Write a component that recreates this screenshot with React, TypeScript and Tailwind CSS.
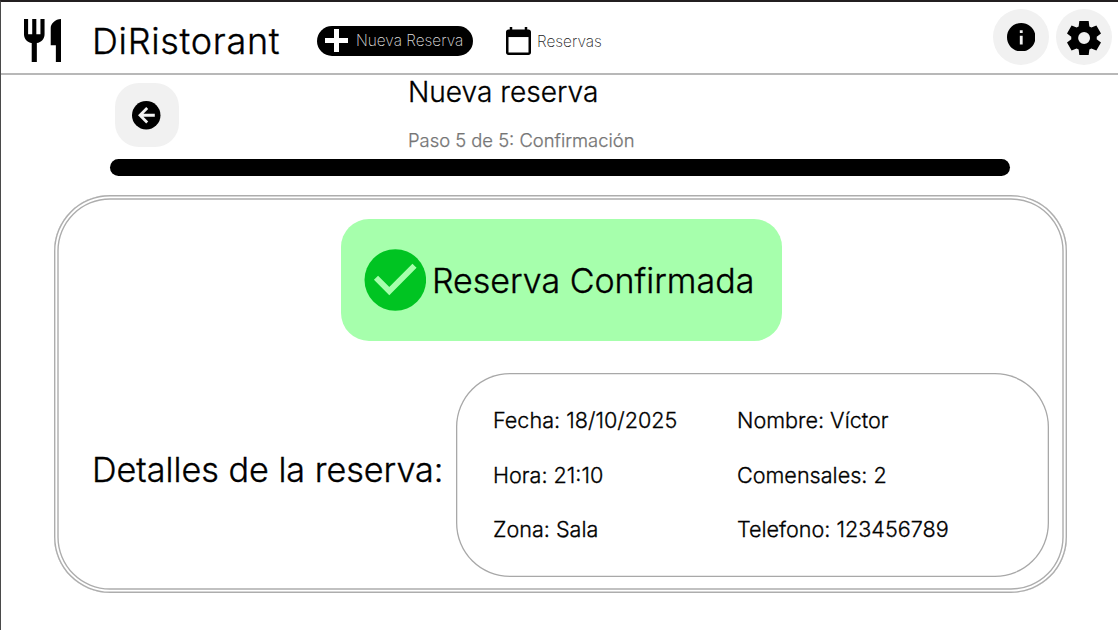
import React from "react";

function RestaurantIcon() {
  return (
    <svg className="h-[43.6px] w-[37px]" viewBox="3 2 18 20" preserveAspectRatio="none" fill="currentColor">
      <path d="M11 9H9V2H7v7H5V2H3v7c0 2.12 1.66 3.84 3.75 3.97V22h2.5v-9.03C11.34 12.84 13 11.12 13 9V2h-2v7zm5-3v8h2.5v8H21V2c-2.76 0-5 2.24-5 4z" />
    </svg>
  );
}

function PlusIcon() {
  return (
    <svg className="h-[23px] w-[23px] shrink-0" viewBox="0 0 23 23" fill="currentColor">
      <path d="M9 0h5v9h9v5h-9v9H9v-9H0V9h9z" />
    </svg>
  );
}

function CalendarIcon() {
  return (
    <svg className="h-[28px] w-[25px] shrink-0" viewBox="2 1 20 22" preserveAspectRatio="none" fill="currentColor">
      <path d="M20 3h-1V1h-2v2H7V1H5v2H4c-1.1 0-2 .9-2 2v16c0 1.1.9 2 2 2h16c1.1 0 2-.9 2-2V5c0-1.1-.9-2-2-2zm0 18H4V8h16v13z" />
      <path d="M3 4h18v4.9H3z" />
    </svg>
  );
}

function InfoIcon() {
  return (
    <svg className="h-[28.5px] w-[28.5px]" viewBox="2 2 20 20" fill="currentColor">
      <path d="M12 2C6.48 2 2 6.48 2 12s4.48 10 10 10 10-4.48 10-10S17.52 2 12 2zm1 15h-2v-6h2v6zm0-8h-2V7h2v2z" />
    </svg>
  );
}

function SettingsIcon() {
  return (
    <svg className="mt-[2px] h-[34px] w-[34px]" viewBox="2 2 20 20" fill="currentColor">
      <path d="m9.25 22-.4-3.2q-.325-.125-.612-.3t-.563-.375L4.7 19.375l-2.75-4.75 2.575-1.95Q4.5 12.5 4.5 12.337v-.675q0-.162.025-.337L1.95 9.375l2.75-4.75 2.975 1.25q.275-.2.575-.375t.6-.3l.4-3.2h5.5l.4 3.2q.325.125.613.3t.562.375l2.975-1.25 2.75 4.75-2.575 1.95q.025.175.025.338v.674q0 .163-.05.338l2.575 1.95-2.75 4.75-2.95-1.25q-.275.2-.575.375t-.6.3l-.4 3.2zm2.8-6.5q1.45 0 2.475-1.025T15.55 12t-1.025-2.475T12.05 8.5q-1.475 0-2.488 1.025T8.55 12t1.013 2.475T12.05 15.5" />
    </svg>
  );
}

function BackIcon() {
  return (
    <svg className="mr-[1px] mt-[1px] h-[28.5px] w-[28.5px]" viewBox="0 0 28.5 28.5" fill="none">
      <circle cx="14.25" cy="14.25" r="14.25" fill="#000" />
      <path d="M22.8 14.25H8M15.2 7l-7.2 7.25 7.2 7.25" stroke="#f1f1f1" strokeWidth="2.8" />
    </svg>
  );
}

function CheckIcon() {
  return (
    <svg className="mt-[1px] h-[62px] w-[62px] shrink-0" viewBox="0 0 62 62" fill="none">
      <circle cx="31.3" cy="31" r="30.8" fill="#00c422" />
      <path d="M12 28.8l13.3 13.3 25.2-25.4" stroke="#a6ffac" strokeWidth="5.8" />
    </svg>
  );
}

const details = [
  "Fecha: 18/10/2025",
  "Nombre: Víctor",
  "Hora: 21:10",
  "Comensales: 2",
  "Zona: Sala",
  "Telefono: 123456789",
];

export default function App() {
  return (
    <div className="flex h-[630px] w-[1118px] flex-col overflow-hidden border-t-2 border-l border-t-[#231f20] border-l-[#4a4a4a] bg-white font-['Inter',sans-serif] whitespace-nowrap text-black">
      <header className="flex h-[73px] shrink-0 items-start border-b-2 border-[#b8b8b8] pr-[6px] pl-[23px]">
        <div className="mt-[16.7px]">
          <RestaurantIcon />
        </div>
        <h1 className="mt-[17px] ml-[31px] w-[225px] text-[36px] leading-[44px] font-light tracking-[0.7px] [-webkit-text-stroke:0.35px_black]">DiRistorant</h1>
        <button className="mt-[24px] flex h-[29.5px] w-[156px] items-center rounded-full bg-black pl-[8px] text-white">
          <PlusIcon />
          <span className="mt-px ml-[8px] text-[15.4px] leading-5 font-extralight text-[#ddd]">Nueva Reserva</span>
        </button>
        <button className="mt-[25px] ml-[33px] flex items-center">
          <CalendarIcon />
          <span className="mt-px ml-[6px] text-[15.4px] leading-5 font-extralight text-[#222]">Reservas</span>
        </button>
        <div className="mt-[7px] ml-auto flex gap-[7px]">
          <button className="grid size-[56px] place-items-center rounded-full bg-[#f1f1f1]">
            <InfoIcon />
          </button>
          <button className="grid size-[56px] place-items-center rounded-full bg-[#f1f1f1]">
            <SettingsIcon />
          </button>
        </div>
      </header>

      <main className="flex flex-col">
        <div className="flex h-[84px] pl-[114px]">
          <button className="mt-[8px] grid size-[63.5px] place-items-center rounded-[24px] bg-[#f1f1f1]">
            <BackIcon />
          </button>
          <div className="ml-[229.5px]">
            <h2 className="text-[28.1px] leading-[34px] font-light [-webkit-text-stroke:0.3px_black]">Nueva reserva</h2>
            <p className="mt-[19px] text-[18.4px] leading-[24px] font-light text-[#757575] [-webkit-text-stroke:0.25px_#757575]">Paso 5 de 5: Confirmación</p>
          </div>
        </div>
        <div className="ml-[109px] h-[16.5px] w-[900px] rounded-full bg-black" />

        <section className="mt-[19.5px] ml-[53px] flex h-[397.5px] w-[1013.3px] flex-col rounded-[56px] p-[4px] shadow-[inset_0_0_0_1.4px_#adadad,inset_0_0_0_3.3px_#fff,inset_0_0_0_4.7px_#adadad]">
          <div className="mt-[20px] ml-[283px] flex h-[121.5px] w-[441px] items-center rounded-[28px] bg-[#a6ffac] pl-[23px]">
            <CheckIcon />
            <span className="mt-[3px] ml-[6px] text-[34px] leading-[44px] font-light [-webkit-text-stroke:0.35px_black]">Reserva Confirmada</span>
          </div>
          <div className="mt-[32.5px] flex pl-[34px]">
            <h3 className="mt-[75px] w-[364px] text-[34.15px] leading-[44px] font-light [-webkit-text-stroke:0.35px_black]">Detalles de la reserva:</h3>
            <div className="grid h-[204px] w-[593px] grid-cols-[244px_1fr] content-start gap-y-[30.5px] rounded-[54px] pt-[35px] pl-[37px] text-[21.6px] leading-[24px] font-light shadow-[inset_0_0_0_1.3px_#a8a8a8] [-webkit-text-stroke:0.3px_black]">
              {details.map((item) => (
                <span key={item}>{item}</span>
              ))}
            </div>
          </div>
        </section>
      </main>
    </div>
  );
}
